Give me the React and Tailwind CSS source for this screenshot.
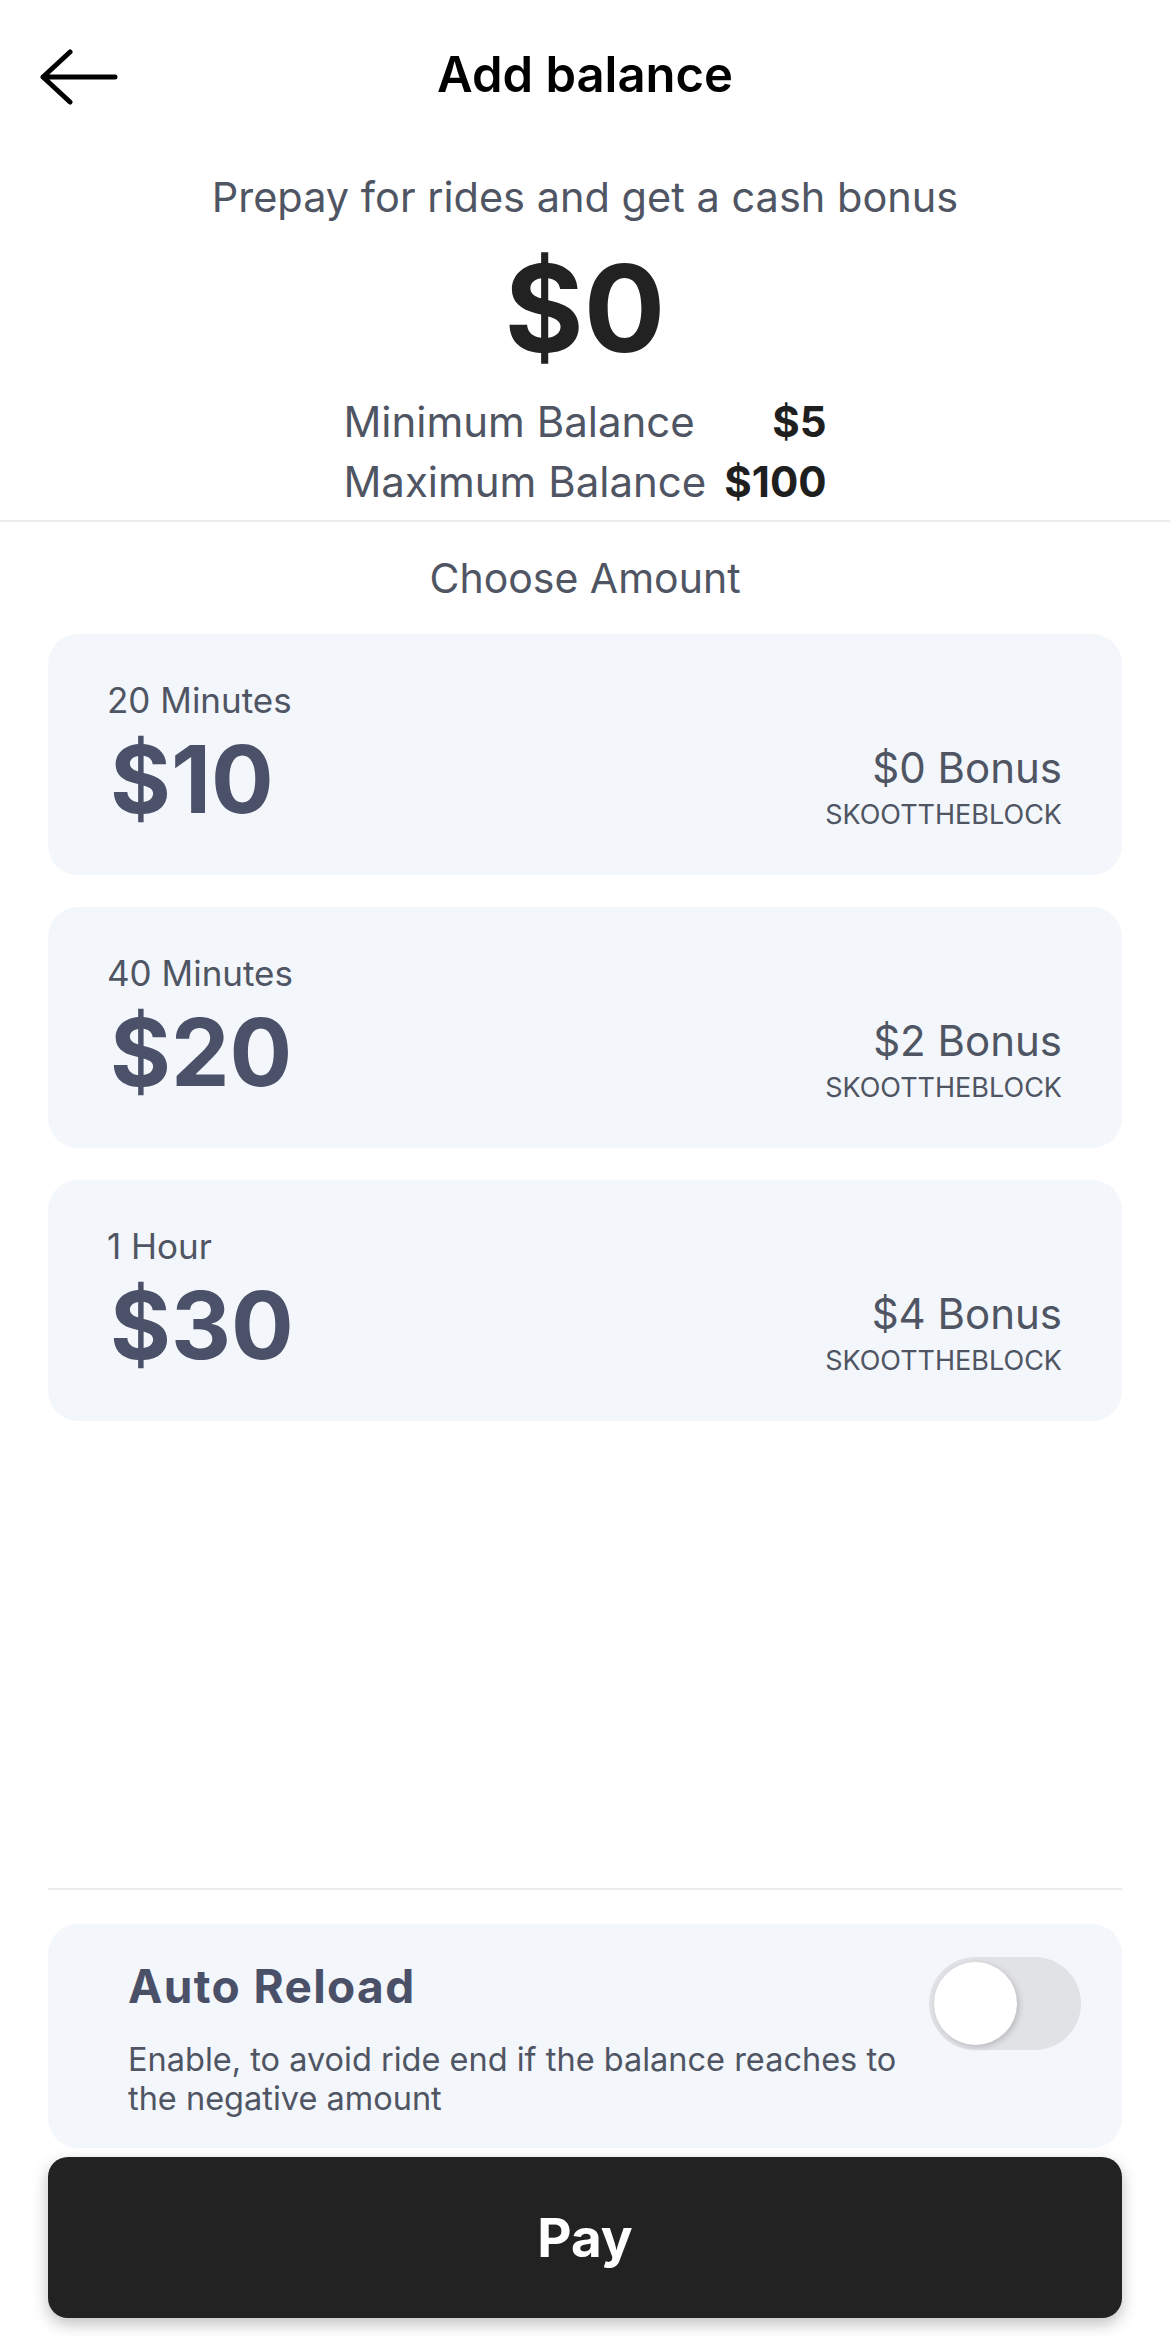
import React from "react";

const cards = [
  { label: "20 Minutes", amount: "$10", bonus: "$0 Bonus" },
  { label: "40 Minutes", amount: "$20", bonus: "$2 Bonus" },
  { label: "1 Hour", amount: "$30", bonus: "$4 Bonus" },
];

function BackArrow() {
  return (
    <svg width="80" height="60" viewBox="0 0 80 60" fill="none">
      <path
        d="M30 5 L3 30 L30 55 M3 30 H75"
        stroke="#000"
        strokeWidth="5"
        strokeLinecap="round"
        strokeLinejoin="round"
      />
    </svg>
  );
}

export default function App() {
  return (
    <div
      className="h-[2336px] w-[1170px] bg-white flex flex-col overflow-hidden"
      style={{ fontFamily: "Inter, 'Noto Sans', 'Liberation Sans', sans-serif" }}
    >
      {/* Header */}
      <div className="h-[150px] grid grid-cols-[1fr_auto_1fr] items-center">
        <div className="pl-[40px] pt-[3px] flex items-center">
          <BackArrow />
        </div>
        <div className="text-[49px] leading-[58px] font-semibold text-black">Add balance</div>
        <div />
      </div>

      <div className="mt-[23px] text-center text-[41.5px] leading-[48px] text-[#4f5563]">
        Prepay for rides and get a cash bonus
      </div>

      <div className="mt-[27px] text-center text-[121px] leading-[120px] font-bold text-[#222222]">$0</div>

      <div className="mt-[24px] flex justify-center">
        <div className="grid grid-cols-[auto_auto] gap-x-[18px] text-[42px] leading-[60px]">
          <div className="text-[#4f5563]">Minimum Balance</div>
          <div className="text-right font-bold text-[#1f1f1f]">$5</div>
          <div className="text-[#4f5563]">Maximum Balance</div>
          <div className="text-right font-bold text-[#1f1f1f]">$100</div>
        </div>
      </div>

      <div className="mt-[8px] h-[2px] bg-[#ebebeb]" />

      <div className="mt-[33px] text-center text-[41px] leading-[46px] text-[#4f5563]">Choose Amount</div>

      <div className="mt-[33px] px-[48px] flex flex-col gap-[32px]">
        {cards.map((c) => (
          <div
            key={c.amount}
            className="h-[241px] rounded-[30px] bg-[#f3f6fb] pl-[59px] pr-[60px] pt-[45px] flex justify-between items-start"
          >
            <div className="flex flex-col">
              <div className="text-[35px] leading-[42px] text-[#4f5563]">{c.label}</div>
              <div className="mt-[12px] ml-[3px] text-[93px] leading-[92px] font-bold text-[#4a5169]">{c.amount}</div>
            </div>
            <div className="mt-[65px] flex flex-col items-end">
              <div className="text-[42px] leading-[48px] text-[#4f5563]">{c.bonus}</div>
              <div className="mt-[6px] text-[27px] leading-[34px] text-[#4f5563]">SKOOTTHEBLOCK</div>
            </div>
          </div>
        ))}
      </div>

      <div className="flex-1" />

      {/* Bottom */}
      <div className="px-[48px] pb-[18px] flex flex-col">
        <div className="h-[2px] bg-[#ebebeb]" />
        <div className="mt-[34px] h-[224px] rounded-[30px] bg-[#f3f6fb] pl-[80px] pr-[41px] flex items-start justify-between">
          <div className="pt-[36px] flex flex-col">
            <div className="text-[46px] leading-[52px] font-bold tracking-[0.03em] text-[#4a5068]">Auto Reload</div>
            <div className="mt-[28px] text-[32.5px] leading-[39px] text-[#4f5563]">
              Enable, to avoid ride end if the balance reaches to
              <br />
              the negative amount
            </div>
          </div>
          <div className="mt-[33px] w-[152px] h-[93px] rounded-full bg-[#e1e2e6] p-[5px] flex items-center">
            <div className="w-[83px] h-[83px] rounded-full bg-white shadow-[2px_2px_6px_rgba(0,0,0,0.18)]" />
          </div>
        </div>
        <div className="mt-[9px] h-[161px] rounded-[20px] bg-[#222222] shadow-[0_6px_16px_rgba(0,0,0,0.25)] flex items-center justify-center">
          <span className="text-[53px] leading-[60px] font-bold text-white">Pay</span>
        </div>
      </div>
    </div>
  );
}
